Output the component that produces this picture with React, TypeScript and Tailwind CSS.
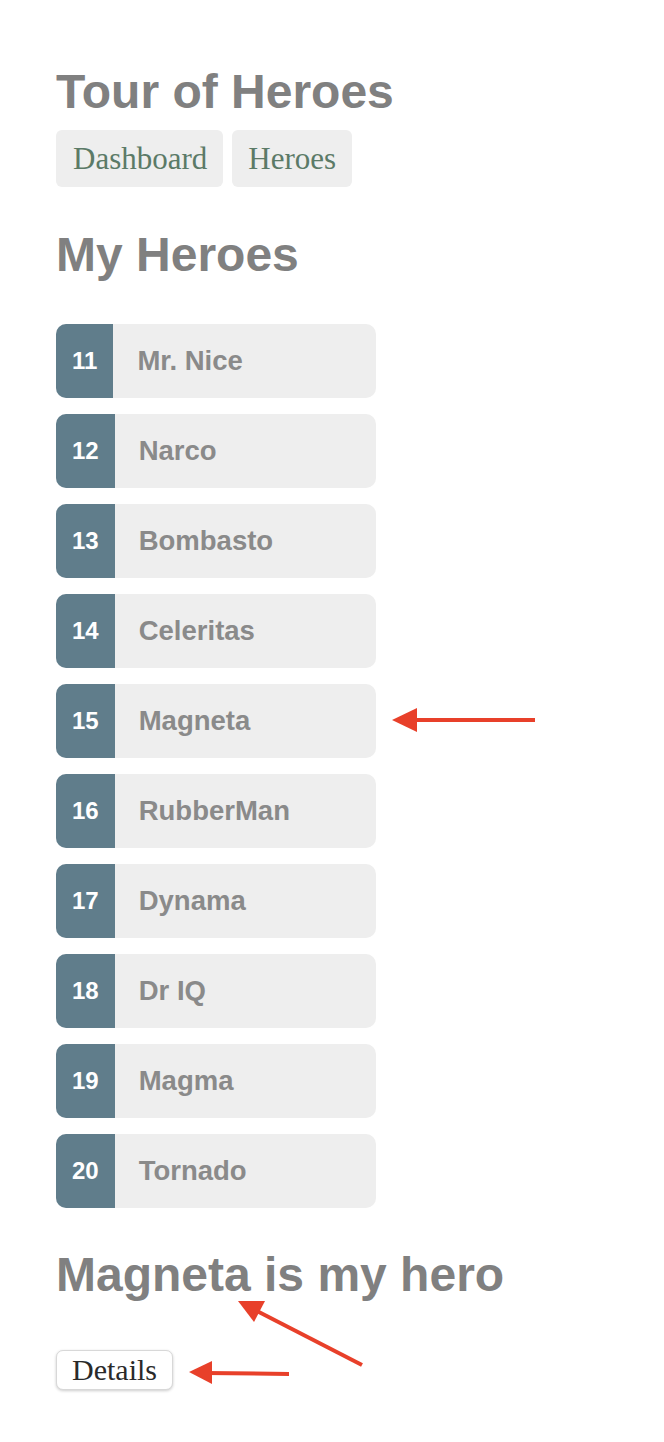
import React from "react";

const heroes = [
  [11, "Mr. Nice"],
  [12, "Narco"],
  [13, "Bombasto"],
  [14, "Celeritas"],
  [15, "Magneta"],
  [16, "RubberMan"],
  [17, "Dynama"],
  [18, "Dr IQ"],
  [19, "Magma"],
  [20, "Tornado"],
] as const;

const arial = { fontFamily: '"Liberation Sans", Arial, sans-serif' };
const serif = { fontFamily: '"Liberation Serif", Georgia, serif' };

export default function App() {
  return (
    <div className="relative min-h-[1442px] w-[664px] bg-white pl-[56px] pt-[65px]">
      <h1
        className="text-[48px] font-bold leading-[54px] text-[#808080]"
        style={arial}
      >
        Tour of Heroes
      </h1>
      <nav className="mt-[11px] flex gap-[9px]" style={serif}>
        <a className="flex h-[57px] items-center rounded-[6px] bg-[#eeeeee] pl-[17px] pr-[16px] text-[31px] leading-none text-[#5b7a67]">
          Dashboard
        </a>
        <a className="flex h-[57px] items-center rounded-[6px] bg-[#eeeeee] px-[16px] text-[31px] leading-none text-[#5b7a67]">
          Heroes
        </a>
      </nav>
      <h2
        className="mt-[41px] text-[48px] font-bold leading-[54px] text-[#808080]"
        style={arial}
      >
        My Heroes
      </h2>
      <ul className="mt-[42px] flex flex-col gap-[16px]" style={arial}>
        {heroes.map(([id, name]) => (
          <li
            key={id}
            className="flex h-[74px] w-[320px] items-center overflow-hidden rounded-[10px] bg-[#eeeeee]"
          >
            <span className="flex h-full items-center bg-[#607d8b] px-[16px] text-[24px] font-bold text-white">
              {id}
            </span>
            <span className="ml-[24px] text-[27.5px] font-bold text-[#8a8a8a]">
              {name}
            </span>
          </li>
        ))}
      </ul>
      <h2
        className="mt-[40px] text-[48px] font-bold leading-[54px] text-[#808080]"
        style={arial}
      >
        Magneta is my hero
      </h2>
      <button
        className="mt-[48px] flex h-[40px] items-center rounded-[7px] border border-[#d8d8d8] bg-white px-[15px] text-[30px] leading-none text-[#2a2a2a] shadow-[0_1px_3px_rgba(0,0,0,0.2)]"
        style={serif}
      >
        Details
      </button>

      <svg
        className="pointer-events-none absolute left-0 top-0"
        width="664"
        height="1442"
        viewBox="0 0 664 1442"
      >
        <g stroke="#e8402a" strokeWidth="4" fill="#e8402a">
          <line x1="535" y1="720" x2="410" y2="720" />
          <polygon points="392,720 417,708 417,732" stroke="none" />
          <line x1="362" y1="1365" x2="255" y2="1310" />
          <polygon points="238,1301 265,1301 254,1322" stroke="none" />
          <line x1="289" y1="1374" x2="205" y2="1373" />
          <polygon points="189,1372 212,1361 212,1384" stroke="none" />
        </g>
      </svg>
    </div>
  );
}
